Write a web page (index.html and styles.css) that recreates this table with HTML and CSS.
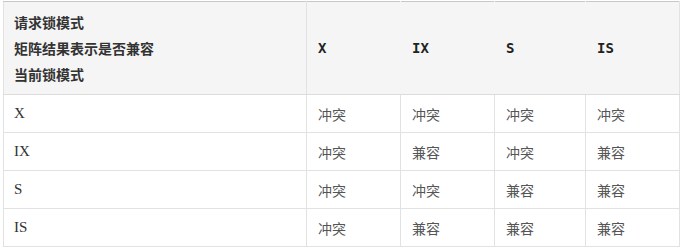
FILE: index.html
```html
<!DOCTYPE html>
<html lang="zh">
<head>
<meta charset="utf-8">
<link rel="stylesheet" href="styles.css">
</head>
<body>
<table class="matrix">
  <colgroup>
    <col class="c-head">
    <col class="c-x">
    <col class="c-ix">
    <col class="c-s">
    <col class="c-is">
  </colgroup>
  <thead>
    <tr>
      <th class="corner">请求锁模式<br>矩阵结果表示是否兼容<br>当前锁模式</th>
      <th class="mode">X</th>
      <th class="mode">IX</th>
      <th class="mode">S</th>
      <th class="mode">IS</th>
    </tr>
  </thead>
  <tbody>
    <tr><td class="rowhead">X</td><td>冲突</td><td>冲突</td><td>冲突</td><td>冲突</td></tr>
    <tr><td class="rowhead">IX</td><td>冲突</td><td>兼容</td><td>冲突</td><td>兼容</td></tr>
    <tr><td class="rowhead">S</td><td>冲突</td><td>冲突</td><td>兼容</td><td>兼容</td></tr>
    <tr><td class="rowhead">IS</td><td>冲突</td><td>兼容</td><td>兼容</td><td>兼容</td></tr>
  </tbody>
</table>
</body>
</html>
```
FILE: styles.css
```css
html, body {
  margin: 0;
  padding: 0;
  background: #ffffff;
}
body {
  padding: 1px 2px 0 3px;
  font-family: "Noto Sans CJK SC", "Noto Sans", sans-serif;
}
.matrix {
  border-collapse: collapse;
  table-layout: fixed;
  width: 676px;
}
.c-head { width: 303px; }
.c-x { width: 94px; }
.c-ix { width: 94px; }
.c-s { width: 91px; }
.c-is { width: 94px; }
.matrix thead tr {
  background: #f5f5f5;
}
.matrix th {
  border-top: 1px solid #c8c8c8;
  border-left: 1px solid #e2e2e2;
  border-right: 1px solid #e2e2e2;
  border-bottom: 1px solid #dcdcdc;
  text-align: left;
  vertical-align: middle;
  color: #333333;
}
.matrix th.corner {
  padding: 7px 10px;
  height: 78px;
  line-height: 26px;
  font-size: 14px;
  font-weight: bold;
  font-family: "Noto Sans CJK SC", sans-serif;
}
.matrix th.mode {
  border-left-color: #f5f5f5;
  border-right-color: #f5f5f5;
  padding: 0 11px;
  font-size: 14px;
  font-weight: bold;
  font-family: "DejaVu Sans Mono", monospace;
  color: #222222;
}
.matrix th.mode:last-child {
  border-right-color: #e2e2e2;
}
.matrix td {
  border: 1px solid #e2e2e2;
  height: 37px;
  padding: 0 11px;
  font-size: 14px;
  color: #555555;
  vertical-align: middle;
  font-family: "Noto Sans CJK SC", sans-serif;
}
.matrix td.rowhead {
  padding-left: 10px;
  font-family: "Liberation Serif", "Noto Serif", serif;
  font-size: 15px;
  color: #333333;
}
```
